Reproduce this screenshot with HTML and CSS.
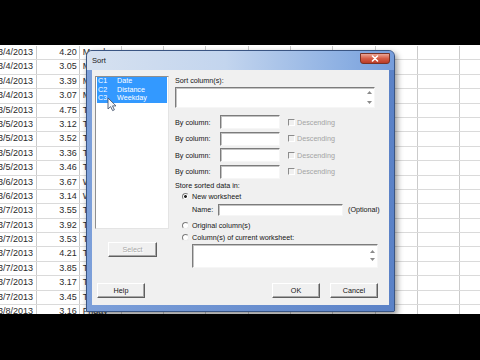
FILE: index.html
```html
<!DOCTYPE html>
<html>
<head>
<meta charset="utf-8">
<link rel="stylesheet" href="styles.css">
</head>
<body>
<div class="screen">
  <div class="sheet">
    <div class="row"><div class="c d">3/4/2013</div><div class="c v">4.20</div><div class="c w">Monday</div></div>
    <div class="row"><div class="c d">3/4/2013</div><div class="c v">3.05</div><div class="c w">Monday</div></div>
    <div class="row"><div class="c d">3/4/2013</div><div class="c v">3.39</div><div class="c w">Monday</div></div>
    <div class="row"><div class="c d">3/4/2013</div><div class="c v">3.07</div><div class="c w">Monday</div></div>
    <div class="row"><div class="c d">3/5/2013</div><div class="c v">4.75</div><div class="c w">Tuesday</div></div>
    <div class="row"><div class="c d">3/5/2013</div><div class="c v">3.12</div><div class="c w">Tuesday</div></div>
    <div class="row"><div class="c d">3/5/2013</div><div class="c v">3.52</div><div class="c w">Tuesday</div></div>
    <div class="row"><div class="c d">3/5/2013</div><div class="c v">3.36</div><div class="c w">Tuesday</div></div>
    <div class="row"><div class="c d">3/5/2013</div><div class="c v">3.46</div><div class="c w">Tuesday</div></div>
    <div class="row"><div class="c d">3/6/2013</div><div class="c v">3.67</div><div class="c w">Wednesday</div></div>
    <div class="row"><div class="c d">3/6/2013</div><div class="c v">3.14</div><div class="c w">Wednesday</div></div>
    <div class="row"><div class="c d">3/7/2013</div><div class="c v">3.55</div><div class="c w">Thursday</div></div>
    <div class="row"><div class="c d">3/7/2013</div><div class="c v">3.92</div><div class="c w">Thursday</div></div>
    <div class="row"><div class="c d">3/7/2013</div><div class="c v">3.53</div><div class="c w">Thursday</div></div>
    <div class="row"><div class="c d">3/7/2013</div><div class="c v">4.21</div><div class="c w">Thursday</div></div>
    <div class="row"><div class="c d">3/7/2013</div><div class="c v">3.85</div><div class="c w">Thursday</div></div>
    <div class="row"><div class="c d">3/7/2013</div><div class="c v">3.17</div><div class="c w">Thursday</div></div>
    <div class="row"><div class="c d">3/7/2013</div><div class="c v">3.45</div><div class="c w">Thursday</div></div>
    <div class="row"><div class="c d">3/8/2013</div><div class="c v">3.16</div><div class="c w">Friday</div></div>
  </div>

  <div class="dlg">
    <div class="title">
      <span class="title-text">Sort</span>
      <span class="close"><svg width="8" height="7" viewBox="0 0 8 7"><path d="M1.5 1 L6.5 6 M6.5 1 L1.5 6" stroke="#fff" stroke-width="1.6" stroke-linecap="round"/></svg></span>
    </div>
    <div class="client">
      <div class="main">
        <div class="left">
          <div class="listbox">
            <div class="item"><span class="cn">C1</span><span>Date</span></div>
            <div class="item"><span class="cn">C2</span><span>Distance</span></div>
            <div class="item"><span class="cn">C3</span><span>Weekday</span></div>
          </div>
          <div class="btn select">Select</div>
        </div>
        <div class="right">
          <div class="lbl">Sort column(s):</div>
          <div class="area big">
            <div class="arrows">
              <svg width="5" height="3" viewBox="0 0 5 3"><path d="M0 3 L2.5 0 L5 3 Z" fill="#8a8a8a"/></svg>
              <svg width="5" height="3" viewBox="0 0 5 3"><path d="M0 0 L2.5 3 L5 0 Z" fill="#8a8a8a"/></svg>
            </div>
          </div>
          <div class="bycol first"><span class="bylbl">By column:</span><span class="field"></span><span class="chk"></span><span class="dis">Descending</span></div>
          <div class="bycol"><span class="bylbl">By column:</span><span class="field"></span><span class="chk"></span><span class="dis">Descending</span></div>
          <div class="bycol"><span class="bylbl">By column:</span><span class="field"></span><span class="chk"></span><span class="dis">Descending</span></div>
          <div class="bycol"><span class="bylbl">By column:</span><span class="field"></span><span class="chk"></span><span class="dis">Descending</span></div>
          <div class="lbl store">Store sorted data in:</div>
          <div class="opt"><span class="radio on"></span>New worksheet</div>
          <div class="namerow"><span class="namelbl">Name:</span><span class="field name"></span><span class="optional">(Optional)</span></div>
          <div class="opt orig"><span class="radio"></span>Original column(s)</div>
          <div class="opt curw"><span class="radio"></span>Column(s) of current worksheet:</div>
          <div class="area cur">
            <div class="arrows">
              <svg width="5" height="3" viewBox="0 0 5 3"><path d="M0 3 L2.5 0 L5 3 Z" fill="#8a8a8a"/></svg>
              <svg width="5" height="3" viewBox="0 0 5 3"><path d="M0 0 L2.5 3 L5 0 Z" fill="#8a8a8a"/></svg>
            </div>
          </div>
        </div>
      </div>
      <div class="btnrow">
        <div class="btn help">Help</div>
        <div class="btn ok">OK</div>
        <div class="btn cancel">Cancel</div>
      </div>
    </div>
  </div>

  <svg class="cursor" width="11" height="15" viewBox="0 0 11 15"><path d="M1 1 L1 12 L3.6 9.6 L5.6 13.6 L7.4 12.8 L5.5 8.9 L9 8.9 Z" fill="#f4f6fa" stroke="#4a5870" stroke-width="0.9" stroke-linejoin="round"/></svg>
</div>
</body>
</html>
```

FILE: styles.css
```css
html, body {
  margin: 0;
  padding: 0;
}
body {
  background: #000;
  width: 480px;
  height: 360px;
  overflow: hidden;
  font-family: "Liberation Sans", Arial, sans-serif;
}
.screen {
  margin-top: 45px;
  height: 269px;
  background: #fff;
  position: relative;
  overflow: hidden;
}
.sheet {
  padding-top: 1px;
  margin-left: -5.3px;
  width: 520px;
}
.row {
  display: grid;
  grid-template-columns: 42.3px 42.3px 42.3px;
  height: 14.4px;
  box-sizing: border-box;
  border-bottom: 1px solid #dadada;
  background: repeating-linear-gradient(to right, transparent 0, transparent 41.3px, #cbcbcb 41.3px, #cbcbcb 42.3px);
  font-size: 9px;
  line-height: 13.4px;
  color: #2b2b2b;
}
.c {
  overflow: hidden;
  white-space: nowrap;
  box-sizing: border-box;
}
.d {
  text-align: right;
  padding-right: 4px;
}
.v {
  text-align: right;
  padding-right: 2.5px;
}
.w {
  padding-left: 3.5px;
}

/* dialog */
.dlg {
  position: absolute;
  left: 86px;
  top: 5px;
  width: 309px;
  height: 262px;
  box-sizing: border-box;
  border: 1px solid #3a5583;
  border-radius: 6px 6px 1px 1px;
  background: linear-gradient(to right, #7c9fd9, #5b82c7);
  display: flex;
  flex-direction: column;
  box-shadow: 2px 3px 6px rgba(0, 0, 0, 0.45);
  font-size: 7.2px;
  color: #151515;
}
.title {
  height: 19px;
  flex: none;
  display: flex;
  align-items: flex-start;
  padding-left: 5px;
  border-radius: 5px 5px 0 0;
  background: linear-gradient(to right, #d6e1f0 0%, #c3d5ee 45%, #8aaee2 85%, #769ddb 100%);
}
.title-text {
  line-height: 19px;
  font-size: 7.6px;
  color: #1a1a1a;
}
.close {
  margin-left: auto;
  margin-right: 4px;
  margin-top: 2px;
  width: 30px;
  height: 11px;
  box-sizing: border-box;
  border: 1px solid #7a3226;
  border-radius: 0 0 3px 3px;
  background: linear-gradient(#eba595, #d65d46 50%, #bb3c27);
  display: flex;
  align-items: center;
  justify-content: center;
}
.client {
  flex: 1;
  margin: 0 5px 6px;
  background: #f0f0f0;
  display: flex;
  flex-direction: column;
}
.main {
  display: flex;
  padding: 6px 0 0 3px;
}
.left {
  width: 74px;
  display: flex;
  flex-direction: column;
}
.listbox {
  height: 153px;
  box-sizing: border-box;
  background: #fff;
  border: 1px solid;
  border-color: #8f8f8f #e4e4e4 #e4e4e4 #8f8f8f;
  padding: 0 1px;
}
.item {
  height: 8.7px;
  line-height: 8.7px;
  background: #3399ff;
  color: #fff;
  padding-left: 1px;
  white-space: nowrap;
}
.cn {
  display: inline-block;
  width: 19px;
}
.btn {
  box-sizing: border-box;
  width: 48px;
  height: 15px;
  background: #f0f0f0;
  border: 1px solid;
  border-color: #ffffff #5f5f5f #5f5f5f #ffffff;
  box-shadow: inset -1px -1px 0 #a7a7a7;
  display: flex;
  align-items: center;
  justify-content: center;
  color: #151515;
}
.select {
  margin: 13px 0 0 13px;
  width: 49px;
  color: #a8a8a8;
  text-shadow: 1px 1px 0 #fff;
}
.right {
  margin-left: 6px;
  width: 210px;
}
.lbl {
  height: 10px;
  line-height: 10px;
  white-space: nowrap;
}
.area {
  box-sizing: border-box;
  background: #fff;
  border: 1px solid;
  border-color: #7c7c7c #f6f6f6 #f6f6f6 #7c7c7c;
  box-shadow: inset 1px 1px 0 #c4c4c4;
  display: flex;
  justify-content: flex-end;
}
.area.big {
  width: 200px;
  height: 21px;
  margin-top: 1px;
}
.arrows {
  width: 10px;
  display: flex;
  flex-direction: column;
  justify-content: space-between;
  align-items: center;
  padding: 3px 0 3px;
}
.bycol {
  display: flex;
  align-items: center;
  height: 14px;
  margin-bottom: 2.5px;
  white-space: nowrap;
}
.bycol.first {
  margin-top: 7px;
}
.bylbl {
  width: 45px;
}
.field {
  box-sizing: border-box;
  width: 60px;
  height: 14px;
  background: #fff;
  border: 1px solid;
  border-color: #7c7c7c #f6f6f6 #f6f6f6 #7c7c7c;
  box-shadow: inset 1px 1px 0 #c2c2c2;
}
.chk {
  box-sizing: border-box;
  width: 7px;
  height: 7px;
  margin-left: 8px;
  border: 1px solid;
  border-color: #8c8c8c #ffffff #ffffff #8c8c8c;
  background: #f0f0f0;
}
.dis {
  margin-left: 2px;
  color: #a4a4a4;
}
.store {
  margin-top: 0;
}
.opt {
  display: flex;
  align-items: center;
  height: 10px;
  padding-left: 7px;
  white-space: nowrap;
}
.radio {
  box-sizing: border-box;
  width: 7px;
  height: 7px;
  border-radius: 50%;
  border: 1px solid;
  border-color: #7c7c7c #ececec #ececec #7c7c7c;
  background: #fff;
  margin-right: 3px;
}
.radio.on {
  background: radial-gradient(circle, #222 0, #222 1.1px, #fff 1.7px);
}
.namerow {
  display: flex;
  align-items: center;
  height: 12px;
  margin-top: 2.5px;
  padding-left: 17px;
  white-space: nowrap;
}
.namelbl {
  width: 26px;
}
.field.name {
  width: 125px;
  height: 12px;
}
.optional {
  margin-left: 5px;
}
.opt.orig {
  margin-top: 5px;
}
.opt.curw {
  margin-top: 2px;
}
.area.cur {
  width: 186px;
  height: 24px;
  margin: 1px 0 0 17px;
}
.area.cur .arrows {
  padding: 5px 0 6px;
}
.btnrow {
  margin-top: auto;
  display: flex;
  padding: 0 11px 7px 5px;
}
.ok {
  margin-left: auto;
}
.cancel {
  margin-left: 10px;
}
.cursor {
  position: absolute;
  left: 107px;
  top: 52px;
}
```
